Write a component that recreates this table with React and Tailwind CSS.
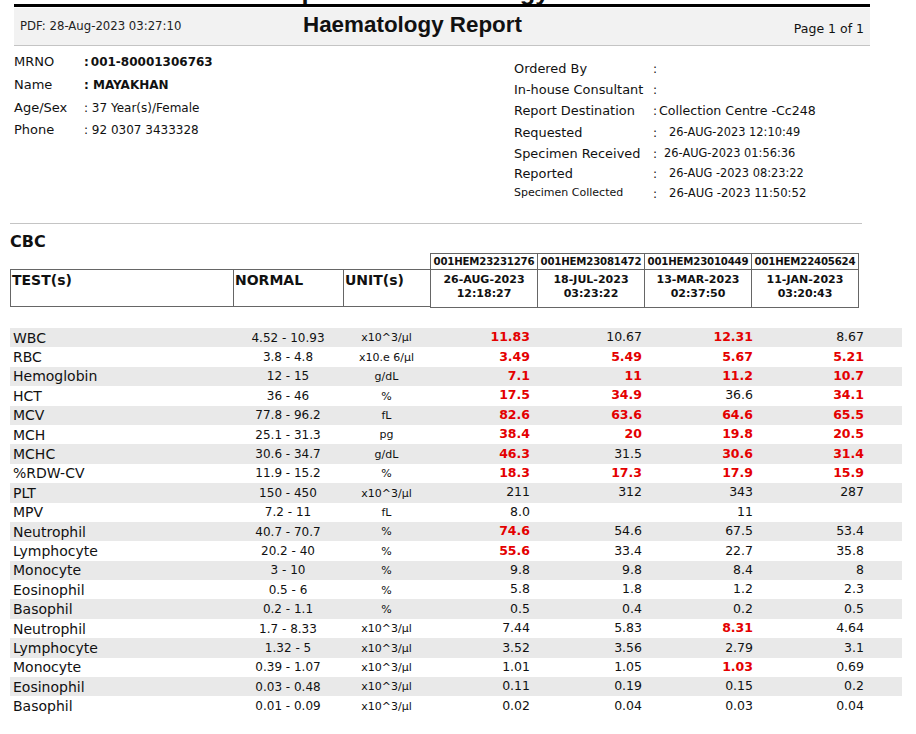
const rows = [
  ['WBC', '4.52 - 10.93', 'x10^3/µl', ['11.83!', '10.67', '12.31!', '8.67']],
  ['RBC', '3.8 - 4.8', 'x10.e 6/µl', ['3.49!', '5.49!', '5.67!', '5.21!']],
  ['Hemoglobin', '12 - 15', 'g/dL', ['7.1!', '11!', '11.2!', '10.7!']],
  ['HCT', '36 - 46', '%', ['17.5!', '34.9!', '36.6', '34.1!']],
  ['MCV', '77.8 - 96.2', 'fL', ['82.6!', '63.6!', '64.6!', '65.5!']],
  ['MCH', '25.1 - 31.3', 'pg', ['38.4!', '20!', '19.8!', '20.5!']],
  ['MCHC', '30.6 - 34.7', 'g/dL', ['46.3!', '31.5', '30.6!', '31.4!']],
  ['%RDW-CV', '11.9 - 15.2', '%', ['18.3!', '17.3!', '17.9!', '15.9!']],
  ['PLT', '150 - 450', 'x10^3/µl', ['211', '312', '343', '287']],
  ['MPV', '7.2 - 11', 'fL', ['8.0', '', '11', '']],
  ['Neutrophil', '40.7 - 70.7', '%', ['74.6!', '54.6', '67.5', '53.4']],
  ['Lymphocyte', '20.2 - 40', '%', ['55.6!', '33.4', '22.7', '35.8']],
  ['Monocyte', '3 - 10', '%', ['9.8', '9.8', '8.4', '8']],
  ['Eosinophil', '0.5 - 6', '%', ['5.8', '1.8', '1.2', '2.3']],
  ['Basophil', '0.2 - 1.1', '%', ['0.5', '0.4', '0.2', '0.5']],
  ['Neutrophil', '1.7 - 8.33', 'x10^3/µl', ['7.44', '5.83', '8.31!', '4.64']],
  ['Lymphocyte', '1.32 - 5', 'x10^3/µl', ['3.52', '3.56', '2.79', '3.1']],
  ['Monocyte', '0.39 - 1.07', 'x10^3/µl', ['1.01', '1.05', '1.03!', '0.69']],
  ['Eosinophil', '0.03 - 0.48', 'x10^3/µl', ['0.11', '0.19', '0.15', '0.2']],
  ['Basophil', '0.01 - 0.09', 'x10^3/µl', ['0.02', '0.04', '0.03', '0.04']],
];

const visits = [
  { id: '001HEM23231276', date: '26-AUG-2023', time: '12:18:27' },
  { id: '001HEM23081472', date: '18-JUL-2023', time: '03:23:22' },
  { id: '001HEM23010449', date: '13-MAR-2023', time: '02:37:50' },
  { id: '001HEM22405624', date: '11-JAN-2023', time: '03:20:43' },
];

const valueWidths = ['w-[100px]', 'w-[112px]', 'w-[111px]', 'w-[111px]'];

const orderInfo = [
  { label: 'Ordered By', value: '', h: 'h-[20px]' },
  { label: 'In-house Consultant', value: '', h: 'h-[21px]' },
  { label: 'Report Destination', value: 'Collection Centre -Cc248', h: 'h-[22px]', gap: 'pl-[2px] text-[12.6px]' },
  { label: 'Requested', value: '26-AUG-2023 12:10:49', h: 'h-[22px]', gap: 'pl-[12px]' },
  { label: 'Specimen Received', value: '26-AUG-2023 01:56:36', h: 'h-[20px]', gap: 'pl-[7px]' },
  { label: 'Reported', value: '26-AUG -2023 08:23:22', h: 'h-[20px]', gap: 'pl-[12px]' },
  { label: 'Specimen Collected', value: '26-AUG -2023 11:50:52', h: 'h-[19px]', gap: 'pl-[12px] text-[11.6px]', small: true },
];

function Value({ v, width }) {
  const flagged = v.endsWith('!');
  const text = flagged ? v.slice(0, -1) : v;
  return (
    <div className={`${width} text-right ${flagged ? 'font-bold text-[#e40000]' : 'text-[#111]'}`}>
      {text}
    </div>
  );
}

export default function App() {
  return (
    <div className="w-[916px] h-[734px] bg-white overflow-hidden font-['DejaVu_Sans',sans-serif] text-[#111]">
      {/* page header */}
      <div className="ml-[14px] w-[856px]">
        <div className="h-[4px] overflow-hidden pl-[255px]">
          <div className="-mt-[21px] leading-none text-[25.5px] font-bold font-['Liberation_Sans',sans-serif] whitespace-nowrap">
            Report of Haematology
          </div>
        </div>
        <div className="h-[3px] bg-black" />
        <div className="h-[38px] mt-[1px] bg-[#f2f2f2] border-b border-[#c4c4c4] flex items-center px-[6px]">
          <div className="w-[283px] text-[11.7px] text-[#222]">PDF: 28-Aug-2023 03:27:10</div>
          <div className="text-[22.4px] font-bold font-['Liberation_Sans',sans-serif] -mt-[3px]">Haematology Report</div>
          <div className="ml-auto text-[12.5px] mt-[6px]">Page 1 of 1</div>
        </div>
      </div>

      {/* patient + order details */}
      <div className="h-[177px] flex">
        <div className="w-[514px] pl-[14px] pt-[5px] text-[13px]">
          <div className="h-[22px] flex items-center">
            <div className="w-[70px]">MRNO</div>
            <div className="text-[12px] font-bold">:<span className="pl-[2px]">001-80001306763</span></div>
          </div>
          <div className="h-[23px] flex items-center">
            <div className="w-[70px]">Name</div>
            <div className="text-[12px] font-bold">: MAYAKHAN</div>
          </div>
          <div className="h-[23px] flex items-center">
            <div className="w-[70px]">Age/Sex</div>
            <div className="text-[12px]">: 37 Year(s)/Female</div>
          </div>
          <div className="h-[21px] flex items-center">
            <div className="w-[70px]">Phone</div>
            <div className="text-[12px]">: 92 0307 3433328</div>
          </div>
        </div>
        <div className="pt-[13px] text-[12.9px]">
          {orderInfo.map((r) => (
            <div key={r.label} className={`${r.h} flex items-center`}>
              <div className={`w-[139px] ${r.small ? 'text-[11px]' : ''}`}>{r.label}</div>
              <div className="flex items-center text-[11.4px]">
                <span className="text-[12px]">:</span>
                <span className={r.gap || ''}>{r.value}</span>
              </div>
            </div>
          ))}
        </div>
      </div>

      <div className="ml-[10px] w-[852px] h-px bg-[#c4c4c4]" />

      {/* CBC table */}
      <div className="pl-[10px]">
        <div className="h-[29px] pt-[8px] text-[16px] font-bold leading-[20px]">CBC</div>

        <div className="flex">
          <div className="w-[420px] pt-[16px]">
            <div className="h-[38px] border border-r-0 border-[#666] flex text-[14px] font-bold leading-[20px]">
              <div className="w-[223px] border-r border-[#666] pl-[1px]">TEST(s)</div>
              <div className="w-[110px] border-r border-[#666] pl-[1px]">NORMAL</div>
              <div className="flex-1 pl-[1px]">UNIT(s)</div>
            </div>
          </div>
          <div className="grid grid-cols-[107px_107px_107px_107px] border-t border-r border-[#666] text-[10.2px] font-bold text-center">
            {visits.map((v) => (
              <div key={v.id} className="border-l border-[#666]">
                <div className="h-[16px] border-b border-[#666] leading-[15px] tracking-[-0.2px]">{v.id}</div>
                <div className="h-[38px] border-b border-[#666] text-[11px] leading-[14px] pt-[3px]">
                  <div>{v.date}</div>
                  <div>{v.time}</div>
                </div>
              </div>
            ))}
          </div>
        </div>

        <div className="mt-[20px] w-[892px]">
          {rows.map(([name, normal, unit, vals], i) => (
            <div key={i} className={`h-[19.4px] flex items-center ${i % 2 === 0 ? 'bg-[#e9e9e9]' : ''}`}>
              <div className="w-[223px] pl-[3px] text-[14px] leading-none">{name}</div>
              <div className="w-[110px] text-center text-[12px]">{normal}</div>
              <div className="w-[87px] text-center text-[11px] pt-[2px]">{unit}</div>
              {vals.map((v, j) => (
                <Value key={j} v={v} width={`${valueWidths[j]} text-[12.5px]`} />
              ))}
            </div>
          ))}
        </div>
      </div>
    </div>
  );
}
